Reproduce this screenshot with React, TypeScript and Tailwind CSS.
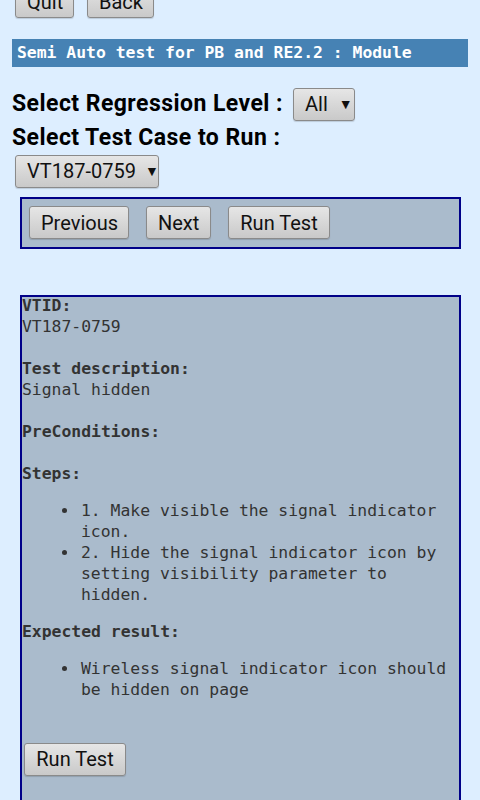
import React from "react";

const btn =
  "h-[33px] px-[11px] rounded-[3px] border border-[#8a8a8a] bg-gradient-to-b from-[#e6e6e6] to-[#c9c9c9] text-[20px] text-[#111] leading-none whitespace-nowrap [font-family:Roboto,sans-serif] shadow-[0_1px_1px_rgba(0,0,0,0.15)]";

const mono = "[font-family:'DejaVu_Sans_Mono',monospace] text-[16.4px] leading-[21px]";

function Item({ children }: { children: React.ReactNode }) {
  return (
    <li className="flex">
      <span className="w-[19px] h-[21px] shrink-0 flex items-center">
        <span className="w-[5px] h-[5px] rounded-full bg-[#333]" />
      </span>
      <span>{children}</span>
    </li>
  );
}

export default function App() {
  return (
    <div className="min-h-[800px] bg-[#ddeeff] overflow-hidden [font-family:Roboto,sans-serif]">
      <div className="flex gap-[13px] pl-[15px] -mt-[15px]">
        <button className={btn + " w-[59px]"}>Quit</button>
        <button className={btn + " w-[67px]"}>Back</button>
      </div>

      <div className="mx-[12px] mt-[21px] h-[28px] bg-[#4682b4] flex items-center px-[5px]">
        <span className={"[font-family:'DejaVu_Sans_Mono',monospace] text-[16.4px] font-bold text-white"}>
          Semi Auto test for PB and RE2.2 : Module
        </span>
      </div>

      <div className="flex items-center mt-[20px] pl-[12px]">
        <span className="text-[23px] tracking-[0.45px] font-bold text-black">Select Regression Level :</span>
        <div className={btn + " ml-[10px] w-[62px] h-[32px] flex items-center gap-[11px] px-[7px]"}>
          <span>All</span>
          <span className="text-[14px]">▼</span>
        </div>
      </div>

      <div className="mt-[2px] pl-[12px] text-[23px] tracking-[0.45px] font-bold text-black leading-[28px]">
        Select Test Case to Run :
      </div>

      <div className="pl-[15px] mt-[3px]">
        <div className={btn + " w-[144px] h-[31px] flex items-center gap-[9px] px-[6px]"}>
          <span>VT187-0759</span>
          <span className="text-[14px]">▼</span>
        </div>
      </div>

      <div className="mx-[20px] mt-[9px] w-[441px] h-[52px] border-2 border-[#000088] bg-[#aabbcc] flex items-center gap-[17px] pl-[7px]">
        <button className={btn + " w-[100px]"}>Previous</button>
        <button className={btn + " w-[65px]"}>Next</button>
        <button className={btn + " w-[102px]"}>Run Test</button>
      </div>

      <div className={"mx-[20px] mt-[46px] w-[441px] border-2 border-[#000088] bg-[#aabbcc] text-[#333] pb-[40px] " + mono}>
        <div className="font-bold -mt-[2px]">VTID:</div>
        <div>VT187-0759</div>
        <div className="h-[21px]" />
        <div className="font-bold">Test description:</div>
        <div>Signal hidden</div>
        <div className="h-[21px]" />
        <div className="font-bold">PreConditions:</div>
        <div className="h-[21px]" />
        <div className="font-bold">Steps:</div>
        <ul className="pl-[40px] pr-[6px] my-[16px]">
          <Item>1. Make visible the signal indicator icon.</Item>
          <Item>2. Hide the signal indicator icon by setting visibility parameter to hidden.</Item>
        </ul>
        <div className="font-bold">Expected result:</div>
        <ul className="pl-[40px] pr-[6px] my-[16px]">
          <Item>Wireless signal indicator icon should be hidden on page</Item>
        </ul>
        <div className="pt-[27px] pl-[2px]">
          <button className={btn + " w-[102px]"}>Run Test</button>
        </div>
      </div>
    </div>
  );
}
